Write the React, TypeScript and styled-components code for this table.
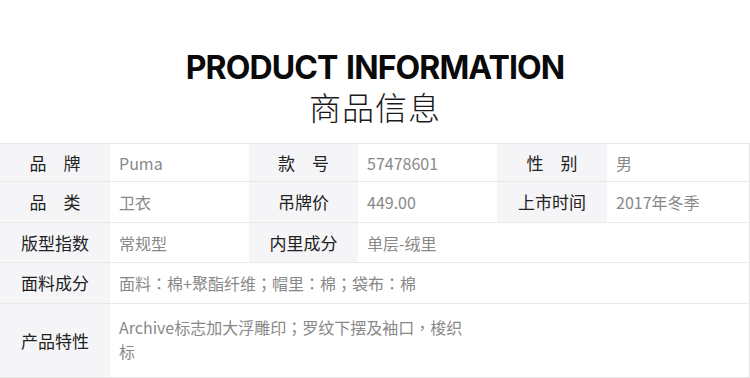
import React from 'react';
import styled, { createGlobalStyle } from 'styled-components';

const GlobalStyle = createGlobalStyle`
  html, body {
    margin: 0;
    padding: 0;
    background: #ffffff;
  }
  body {
    font-family: "Noto Sans CJK SC", "Noto Sans", sans-serif;
  }
`;

const Page = styled.div`
  width: 750px;
  background: #fff;
`;

const Header = styled.header`
  height: 143px;
  display: flex;
  flex-direction: column;
  align-items: center;
  padding-top: 51px;
  box-sizing: border-box;
`;

const Title = styled.h1`
  margin: 0;
  font-family: Inter, "Liberation Sans", sans-serif;
  font-weight: 700;
  font-size: 32px;
  line-height: 33px;
  letter-spacing: -0.9px;
  word-spacing: 2px;
  color: #0a0a0a;
`;

const SubTitle = styled.h2`
  margin: 2px 0 0;
  font-family: "Noto Sans CJK SC", sans-serif;
  font-weight: 300;
  font-size: 32px;
  line-height: 40px;
  letter-spacing: 1px;
  color: #1a1a1a;
`;

const Table = styled.div`
  display: grid;
  grid-template-columns: 110px 139px 109px 139px 110px 1fr;
  grid-template-rows: 38px 41px 40px 41px 74px;
  width: 749px;
  border-right: 1px solid #e6e6e6;
  border-bottom: 1px solid #e6e6e6;
`;

const Cell = styled.div<{ $span?: number }>`
  grid-column: span ${(p) => p.$span ?? 1};
  border-top: 1px solid #e8e8e8;
  display: flex;
  align-items: center;
  font-size: 17px;
  line-height: 24px;
  min-width: 0;
`;

const Label = styled(Cell)`
  justify-content: center;
  background: #f5f5f8;
  color: #222;
  white-space: pre;
`;

const Value = styled(Cell)<{ $wrap?: boolean }>`
  padding-left: 9px;
  background: #fff;
  color: #888;
  font-family: "Noto Sans CJK TC", "Noto Sans CJK SC", sans-serif;
  font-size: 16px;

  span {
    display: block;
    max-width: ${(p) => (p.$wrap ? '350px' : 'none')};
    padding-bottom: ${(p) => (p.$wrap ? '4px' : '0')};
  }
`;

type Row = Array<{ label: string; value: string; span?: number; wrap?: boolean }>;

const rows: Row[] = [
  [
    { label: '品　牌', value: 'Puma' },
    { label: '款　号', value: '57478601' },
    { label: '性　别', value: '男' },
  ],
  [
    { label: '品　类', value: '卫衣' },
    { label: '吊牌价', value: '449.00' },
    { label: '上市时间', value: '2017年冬季' },
  ],
  [
    { label: '版型指数', value: '常规型' },
    { label: '内里成分', value: '单层-绒里', span: 3 },
  ],
  [{ label: '面料成分', value: '面料：棉+聚酯纤维；帽里：棉；袋布：棉', span: 5 }],
  [
    {
      label: '产品特性',
      value: 'Archive标志加大浮雕印；罗纹下摆及袖口，梭织标',
      span: 5,
      wrap: true,
    },
  ],
];

const App = () => {
  return (
    <Page>
      <GlobalStyle />
      <Header>
        <Title>PRODUCT INFORMATION</Title>
        <SubTitle>商品信息</SubTitle>
      </Header>
      <Table>
        {rows.map((row, i) =>
          row.map((item, j) => (
            <React.Fragment key={`${i}-${j}`}>
              <Label>{item.label}</Label>
              <Value $span={item.span} $wrap={item.wrap}>
                <span>{item.value}</span>
              </Value>
            </React.Fragment>
          ))
        )}
      </Table>
    </Page>
  );
};

export default App;
